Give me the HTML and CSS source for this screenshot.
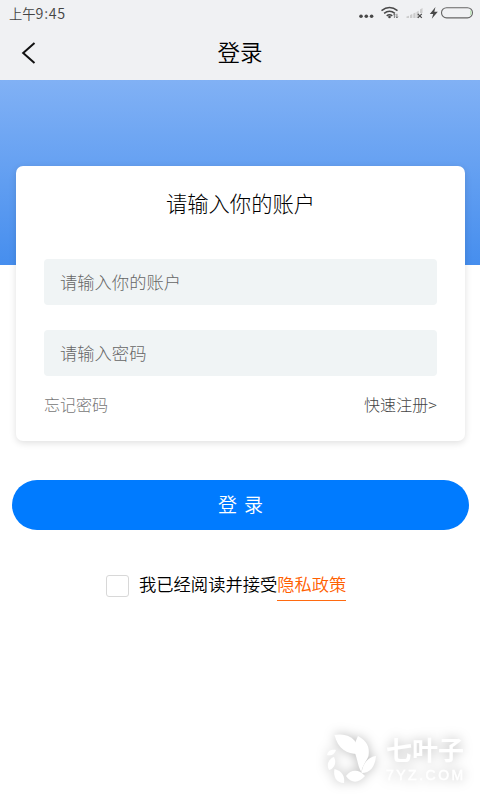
FILE: index.html
```html
<!DOCTYPE html>
<html lang="zh-CN">
<head>
<meta charset="utf-8">
<title>登录</title>
<link rel="stylesheet" href="styles.css">
</head>
<body>
<div class="screen">
  <div class="status">
    <span class="time">上午<span class="digits">9:45</span></span>
    <svg class="status-icons" width="120" height="26" viewBox="0 0 120 26" fill="none">
      <g fill="#484848"><circle cx="1" cy="16.3" r="1.8"/><circle cx="6.3" cy="16.3" r="1.8"/><circle cx="11.6" cy="16.3" r="1.8"/></g>
      <g stroke="#484848" stroke-width="1.5"><path d="M21.5 10.6Q29.5 4.4 37.5 10.6M24.1 13.3Q29.5 9 34.9 13.3M26.7 15.8Q29.5 13.6 32.3 15.8"/></g>
      <circle cx="29.5" cy="17" r="1.3" fill="#484848"/>
      <path d="M34.4 18v-4m-1 1.2 1-1.4 1 1.4M36.9 13.8v4m-1-1.2 1 1.4 1-1.4" stroke="#666" stroke-width=".8"/>
      <path d="M46.500 18v-1.500l2.500-.8V18zM50 18v-3l2.300-1V18zM53.300 18v-4.500l2.200-1V18zM56.500 18v-6l2.200-1.200V18zM60 13V9.500l2.500-1.600V13z" fill="#ccc"/>
      <path d="m57.8 13.8 4 4m0-4-4 4" stroke="#484848" stroke-width="1.2"/>
      <path d="m75.5 7-5.7 7h3.4l-1.4 4.8 6-7h-3.5z" fill="#484848"/>
      <rect x="81.5" y="7.7" width="31" height="10.2" rx="5.1" stroke="#666" stroke-width="1.1"/>
      <path d="M110.8 10.5v4.5" stroke="#a9dfa0"/>
    </svg>
  </div>
  <header class="nav">
    <svg class="back" width="16" height="24" viewBox="0 0 16 24" fill="none" stroke="#111" stroke-width="2"><path d="M13.5 2 2.2 12l11.3 10"/></svg>
    <h1>登录</h1>
  </header>
  <div class="banner"></div>
  <main>
    <section class="card">
      <h2>请输入你的账户</h2>
      <div class="field">请输入你的账户</div>
      <div class="field">请输入密码</div>
      <div class="links"><span>忘记密码</span><span class="register">快速注册&gt;</span></div>
    </section>
    <div class="submit"><span>登</span><span>录</span></div>
    <div class="agree"><span class="box"></span><span>我已经阅读并接受</span><span class="policy">隐私政策</span></div>
  </main>
  <div class="brand">
    <svg width="52" height="54" viewBox="0 0 52 54" fill="#fff">
      <path d="M7.5 2C18 0 27 4 30 12L31 21C20 21 11 16 7.5 2Z"/>
      <path d="M31 3C40 8 43 14 41.5 23C39 29 35 33 34.5 39C31 34 31 28 28 20C26 12 29 8 31 3Z"/>
      <path d="M49 23C48 34 43 40 34.5 40C36 30 41 24 49 23Z"/>
      <path d="M38 43C31 51 24 50 19 43C24 36 32 36 38 43Z"/>
      <path d="M7.5 36C15 38 18 43 17 50C9 50 6 43 7.5 36Z"/>
      <path d="M7 24C10 30 7 36 2 37C-1 31 2 26 7 24Z"/>
      <path d="M9 17C7 22 4 23 0 22C1 17 5 16 9 17Z"/>
    </svg>
    <div class="brand-text"><strong>七叶子</strong><span>7YZ.COM</span></div>
  </div>
</div>
</body>
</html>
```
FILE: styles.css
```css
* { box-sizing: border-box; }
body {
  margin: 0;
  font-family: "Noto Sans CJK SC", sans-serif;
  font-weight: 300;
  background: #fff;
}
.screen {
  position: relative;
  width: 480px;
  height: 800px;
  overflow: hidden;
  background: #fff;
}
.status {
  display: flex;
  justify-content: space-between;
  height: 26px;
  padding-left: 9px;
  background: #f0f1f3;
}
.status-icons { overflow: visible; }
.time {
  font-size: 13.3px;
  line-height: 26px;
  font-weight: 350;
  color: #444;
}
.digits {
  font-size: 14.3px;
  letter-spacing: .7px;
}
.nav {
  display: grid;
  grid-template-columns: 80px 1fr 80px;
  align-items: center;
  height: 54px;
  background: #f0f1f3;
}
.back { margin-left: 21px; }
.nav h1 {
  margin: 0;
  font-size: 22.5px;
  line-height: 50px;
  height: 54px;
  font-weight: 350;
  text-align: center;
  color: #000;
}
.banner {
  height: 185px;
  background: linear-gradient(#81b1f5, #468eee);
}
main { margin-top: -99px; position: relative; }
.card {
  width: 449px;
  height: 275px;
  margin-left: 16px;
  padding: 0 28px;
  border-radius: 7px;
  background: #fff;
  box-shadow: 0 2px 7px rgba(0, 0, 0, .13);
}
.card h2 {
  margin: 0;
  padding-top: 21px;
  height: 93px;
  font-size: 21.3px;
  line-height: 32px;
  font-weight: 300;
  text-align: center;
  color: #000;
}
.field {
  height: 46px;
  margin-bottom: 25px;
  padding-left: 16px;
  border-radius: 4px;
  font-size: 17.3px;
  line-height: 45px;
  color: #666;
  background: #f0f4f5;
}
.links {
  display: flex;
  justify-content: space-between;
  margin-top: -9px;
  font-size: 16px;
  line-height: 24px;
  color: #777;
}
.register { letter-spacing: .1px; color: #444; }
.submit {
  display: flex;
  justify-content: center;
  gap: 7px;
  width: 457px;
  height: 50px;
  margin: 39px 0 0 12px;
  border-radius: 25px;
  font-size: 19px;
  line-height: 48px;
  font-weight: 350;
  color: #fff;
  background: #007bff;
}
.agree {
  display: flex;
  height: 30px;
  margin: 41px 0 0 106px;
  font-size: 17.3px;
  line-height: 25px;
  font-weight: 350;
  color: #000;
}
.box {
  width: 23px;
  height: 22px;
  margin: 4px 10px 0 0;
  border: 1px solid #d8d8d8;
  border-radius: 3px;
}
.policy {
  border-bottom: 1px solid #ff6a10;
  color: #ff6000;
}
.brand {
  position: absolute;
  left: 327px;
  top: 733px;
  display: flex;
  gap: 7px;
  color: #fff;
  filter: drop-shadow(0 0 6px rgba(0, 0, 0, .27));
}
.brand-text { display: flex; flex-direction: column; }
.brand-text strong {
  font-size: 26px;
  line-height: 32px;
  font-weight: 700;
}
.brand-text span {
  margin-top: 3px;
  font-family: "Liberation Sans", sans-serif;
  font-size: 14px;
  line-height: 14px;
  font-weight: 400;
  letter-spacing: 2.5px;
  -webkit-text-stroke: .4px #fff;
}
```
